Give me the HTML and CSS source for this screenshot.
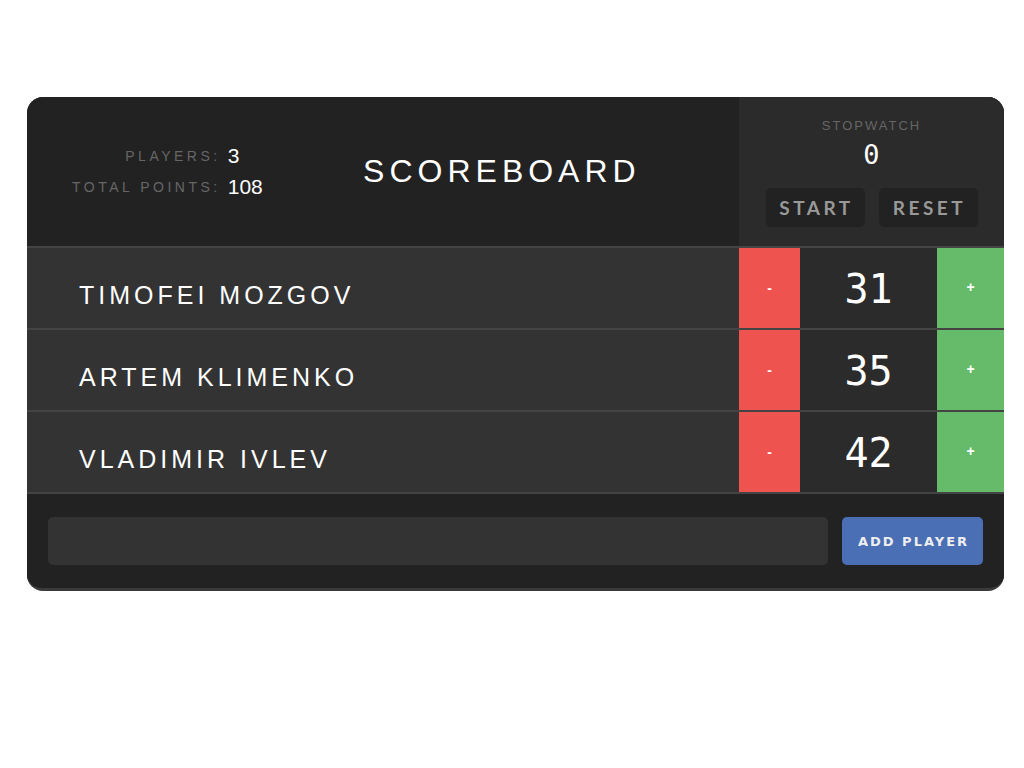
FILE: index.html
```html
<!DOCTYPE html>
<html>
<head>
<meta charset="utf-8">
<link rel="stylesheet" href="styles.css">
</head>
<body>
<div class="scoreboard">
  <div class="header">
    <table class="stats">
      <tr><td class="label">Players:</td><td class="value">3</td></tr>
      <tr><td class="label">Total Points:</td><td class="value">108</td></tr>
    </table>
    <h1 class="title">Scoreboard</h1>
    <div class="stopwatch">
      <div class="sw-label">Stopwatch</div>
      <div class="sw-time">0</div>
      <div class="sw-buttons">
        <button class="sw-btn">Start</button>
        <button class="sw-btn">Reset</button>
      </div>
    </div>
  </div>
  <div class="players">
    <div class="player">
      <div class="player-name">Timofei Mozgov</div>
      <div class="counter">
        <button class="minus">-</button>
        <div class="score">31</div>
        <button class="plus">+</button>
      </div>
    </div>
    <div class="player">
      <div class="player-name">Artem Klimenko</div>
      <div class="counter">
        <button class="minus">-</button>
        <div class="score">35</div>
        <button class="plus">+</button>
      </div>
    </div>
    <div class="player">
      <div class="player-name">Vladimir Ivlev</div>
      <div class="counter">
        <button class="minus">-</button>
        <div class="score">42</div>
        <button class="plus">+</button>
      </div>
    </div>
  </div>
  <form class="add-form">
    <input class="add-input" type="text">
    <button class="add-btn" type="button">Add Player</button>
  </form>
</div>
</body>
</html>
```
FILE: styles.css
```css
* { box-sizing: border-box; }
html, body { margin: 0; padding: 0; background: #fff; }
body {
  font-family: "Liberation Sans", Arial, sans-serif;
  padding: 97px 20px 0 27px;
}
.scoreboard {
  width: 977px;
  background: #333;
  border-radius: 16px;
  overflow: hidden;
  border-bottom: 3px solid #3a3a3a;
}
.header {
  display: flex;
  height: 151px;
  background: #222;
  border-bottom: 2px solid #444;
}
.stats {
  align-self: center;
  margin-left: 45px;
  border-collapse: collapse;
}
.stats td { padding: 0; }
.stats .label {
  text-align: right;
  color: #666;
  font-size: 14px;
  letter-spacing: 3.5px;
  text-transform: uppercase;
  padding-right: 7px;
  height: 31px;
}
.stats .value {
  color: #fff;
  font-size: 21px;
  text-align: left;
}
.title {
  flex: 1;
  margin: 0;
  align-self: center;
  text-align: center;
  color: #fff;
  font-weight: normal;
  font-size: 32px;
  letter-spacing: 5px;
  text-transform: uppercase;
  padding-left: 2px;
}
.stopwatch {
  width: 265px;
  background: #2b2b2b;
  display: flex;
  flex-direction: column;
  align-items: center;
  padding-top: 21px;
}
.sw-label {
  color: #666;
  font-size: 13px;
  letter-spacing: 2px;
  text-transform: uppercase;
}
.sw-time {
  color: #fff;
  font-family: "DejaVu Sans Mono", monospace;
  font-size: 27px;
  margin-top: 6px;
}
.sw-buttons {
  display: flex;
  gap: 14px;
  margin-top: 18px;
}
.sw-btn {
  width: 99px;
  height: 39px;
  background: #222;
  border: none;
  border-radius: 5px;
  color: #999;
  font-family: Lato, "Liberation Sans", sans-serif;
  font-weight: bold;
  font-size: 19px;
  letter-spacing: 3.5px;
  text-transform: uppercase;
  padding: 0 0 0 3px;
}
.player {
  display: flex;
  height: 82px;
  border-bottom: 2px solid #444;
}
.player-name {
  flex: 1;
  color: #fff;
  font-size: 25px;
  letter-spacing: 4px;
  text-transform: uppercase;
  padding-left: 52px;
  padding-top: 15px;
  display: flex;
  align-items: center;
}
.counter {
  display: flex;
  width: 265px;
}
.minus, .plus {
  border: none;
  color: #fff;
  font-family: "Liberation Sans", sans-serif;
  font-size: 14px;
  font-weight: bold;
  padding: 0;
}
.minus { width: 61px; background: #ef5350; }
.plus { width: 67px; background: #66bb6a; padding-bottom: 2px; }
.score {
  flex: 1;
  background: #2b2b2b;
  color: #fff;
  font-family: "DejaVu Sans Mono", monospace;
  font-size: 40px;
  display: flex;
  align-items: center;
  justify-content: center;
  padding-top: 2px;
}
.add-form {
  display: flex;
  gap: 14px;
  margin: 0;
  padding: 23px 21px 23px 21px;
  background: #222;
}
.add-input {
  flex: 1;
  height: 48px;
  background: #333;
  border: none;
  border-radius: 5px;
}
.add-btn {
  width: 141px;
  height: 48px;
  background: #4a6fb5;
  border: none;
  border-radius: 5px;
  color: #eee;
  font-family: "DejaVu Sans", sans-serif;
  font-weight: bold;
  font-size: 13px;
  letter-spacing: 2px;
  text-transform: uppercase;
  padding: 0 0 0 2px;
}
```
